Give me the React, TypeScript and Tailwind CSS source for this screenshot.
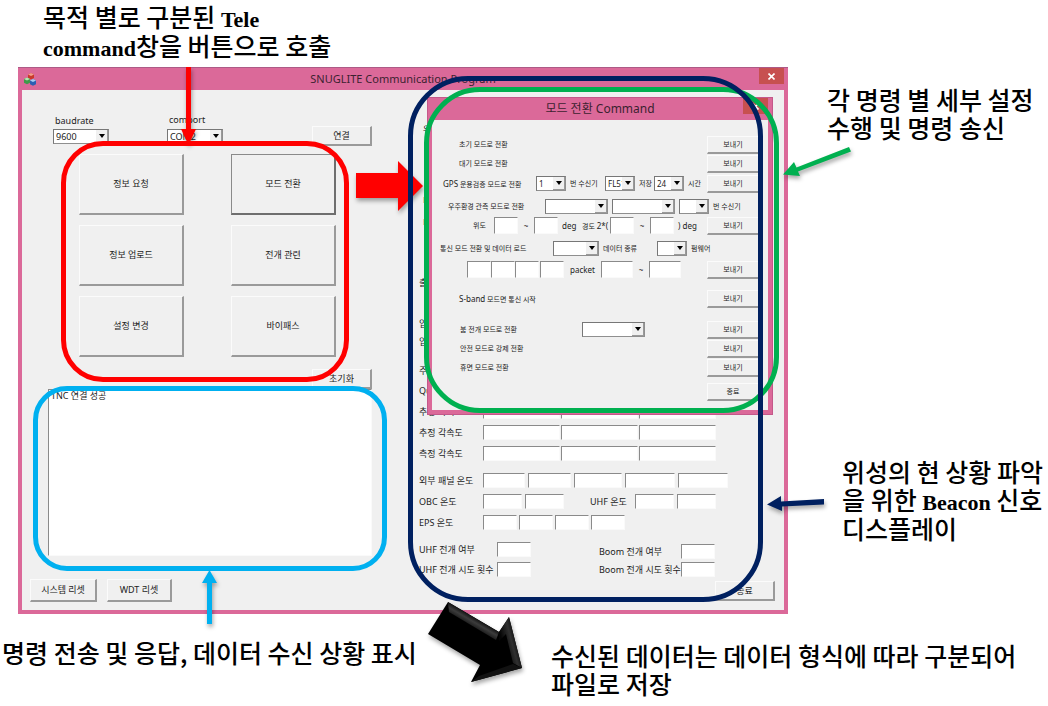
import React from "react";

const UI = "font-['Noto_Sans','Noto_Sans_CJK_KR',sans-serif]";

type BoxProps = { className: string; label: string };

function Field({ className, label }: BoxProps) {
  return (
    <input
      type="text"
      aria-label={label}
      className={`block shrink-0 border border-t-[#8a8a8a] border-l-[#8a8a8a] border-r-[#fafafa] border-b-[#fafafa] bg-white px-0.5 outline-none ${className}`}
    />
  );
}

function Drop({ className, label, value = "", id }: BoxProps & { value?: string; id?: string }) {
  return (
    <span className={`relative block h-[15px] shrink-0 ${className}`}>
      <select
        id={id}
        aria-label={label}
        defaultValue={value}
        className="block h-full w-full appearance-none border border-t-[#777] border-l-[#777] border-r-[#8f8f8f] border-b-[#8f8f8f] bg-white pl-0.5 leading-none text-[#222] outline-none"
      >
        <option value={value}>{value}</option>
      </select>
      <span className="pointer-events-none absolute top-px right-px bottom-px flex w-3 items-center justify-center border-r border-b border-[#9a9a9a] bg-[#f0f0f0]">
        <svg width="6" height="4" viewBox="0 0 6 4" aria-hidden="true">
          <path d="M0 0h6L3 4z" fill="#000" />
        </svg>
      </span>
    </span>
  );
}

function Push({
  className = "",
  strong = false,
  children,
}: {
  className?: string;
  strong?: boolean;
  children: React.ReactNode;
}) {
  const edge = strong
    ? "border-t border-l border-r-2 border-b-2 border-t-[#8a8a8a] border-l-[#8a8a8a] border-r-[#6e6e6e] border-b-[#6e6e6e]"
    : "border-t border-l border-r-2 border-b-2 border-t-[#fbfbfb] border-l-[#fbfbfb] border-r-[#9a9a9a] border-b-[#9a9a9a]";
  return (
    <button type="button" className={`flex shrink-0 items-center justify-center bg-[#f0f0f0] whitespace-nowrap ${edge} ${className}`}>
      {children}
    </button>
  );
}

function Close({ className }: { className: string }) {
  return (
    <button type="button" aria-label="닫기" className={`flex items-center justify-center bg-[#c75050] ${className}`}>
      <svg width="7" height="7" viewBox="0 0 7 7" aria-hidden="true">
        <path d="M0.5 0.5l6 6M6.5 0.5l-6 6" stroke="#fff" strokeWidth="1.6" />
      </svg>
    </button>
  );
}

function Row({ className = "", send = true, children }: { className?: string; send?: boolean; children: React.ReactNode }) {
  return (
    <div className={`flex h-[19px] items-center pr-2 whitespace-nowrap ${className}`}>
      {children}
      {send && <Push className="ml-auto h-[18px] w-[53px]">보내기</Push>}
    </div>
  );
}

function ModeDialog() {
  return (
    <section
      aria-label="모드 전환 Command"
      className="absolute top-[29px] left-[409px] w-[346px] border border-[#c4588a] bg-[#db6999] px-1 pb-1 text-[7px] leading-none text-[#222]"
    >
      <header className="relative flex h-[22px] items-center justify-center text-[12px] text-[#3c2230]">
        모드 전환 Command
        <Close className="absolute top-0 right-0 h-4 w-[25px]" />
      </header>
      <div className="bg-[#f0f0f0] pt-[15px] pb-[9px]">
        <Row className="pl-[27px]">초기 모드로 전환</Row>
        <Row className="pl-[27px]">대기 모드로 전환</Row>
        <Row className="mt-px pl-[11px]">
          <span className="w-[93px]"><span className="text-[8px]">GPS</span> 운용검증 모드로 전환</span>
          <Drop className="w-[30px] text-[8px]" label="수신기 번호" value="1" />
          <span className="ml-1 w-[35px]">번 수신기</span>
          <Drop className="w-[30px] text-[8px]" label="저장 파일" value="FL51" />
          <span className="ml-1 w-[15px]">저장</span>
          <Drop className="w-[30px] text-[8px]" label="저장 시간" value="24" />
          <span className="ml-1">시간</span>
        </Row>
        <Row className="mt-1 pl-4" send={false}>
          <span className="w-[97px]">우주환경 관측 모드로 전환</span>
          <Drop className="w-[63px]" label="관측 종류" />
          <Drop className="ml-1 w-[63px]" label="관측 방식" />
          <Drop className="ml-1 w-[30px]" label="관측 수신기" />
          <span className="ml-1">번 수신기</span>
        </Row>
        <Row className="pl-[41px]">
          <span className="w-[21px]">위도</span>
          <Field className="h-[17px] w-6" label="위도 시작" />
          <span className="w-4 text-center text-[8px]">~</span>
          <Field className="h-[17px] w-6" label="위도 끝" />
          <span className="ml-1 w-5 text-[8px]">deg</span>
          <span className="w-7 whitespace-nowrap">경도 <span className="text-[8px]">2*(</span></span>
          <Field className="h-[17px] w-6" label="경도 시작" />
          <span className="w-4 text-center text-[8px]">~</span>
          <Field className="h-[17px] w-6" label="경도 끝" />
          <span className="ml-1 text-[8px]">) deg</span>
        </Row>
        <Row className="mt-1 pl-2" send={false}>
          <span className="w-[113px]">통신 모드 전환 및 데이터 로드</span>
          <Drop className="w-[46px]" label="데이터 종류" />
          <span className="ml-1 w-[54px]">데이터 종류</span>
          <Drop className="w-[30px]" label="펌웨어" />
          <span className="ml-1">펌웨어</span>
        </Row>
        <Row className="mt-0.5 pl-[35px]">
          <Field className="h-[17px] w-6" label="packet 1" />
          <Field className="h-[17px] w-6" label="packet 2" />
          <Field className="h-[17px] w-6" label="packet 3" />
          <Field className="ml-px h-[17px] w-6" label="packet 4" />
          <span className="w-[37px] text-center text-[8px]">packet</span>
          <Field className="h-[17px] w-8" label="packet 시작" />
          <span className="w-4 text-center text-[8px]">~</span>
          <Field className="h-[17px] w-8" label="packet 끝" />
        </Row>
        <Row className="mt-2.5 pl-[27px]"><span><span className="text-[8px]">S-band</span> 모드면 통신 시작</span></Row>
        <Row className="mt-3 pl-7">
          <span className="w-[122px]">붐 전개 모드로 전환</span>
          <Drop className="w-[63px]" label="전개 대상" />
        </Row>
        <Row className="pl-7">안전 모드로 강제 전환</Row>
        <Row className="pl-7">휴면 모드로 전환</Row>
        <div className="mt-1.5 flex justify-end pr-2">
          <Push className="h-[18px] w-[53px]">종료</Push>
        </div>
      </div>
    </section>
  );
}

function ControlPanel() {
  return (
    <div className="flex w-[378px] shrink-0 flex-col">
      <div className="flex items-end pt-[23px] pl-[31px]">
        <div className="w-[114px]">
          <label htmlFor="baud" className="block pb-0.5 pl-0.5 leading-[13px]">baudrate</label>
          <Drop id="baud" className="w-14" label="baudrate" value="9600" />
        </div>
        <div className="w-[145px]">
          <label htmlFor="port" className="block pb-[3px] pl-0.5 leading-[13px]">comport</label>
          <Drop id="port" className="w-14" label="comport" value="COM2" />
        </div>
        <Push className="-mb-0.5 h-5 w-[60px]">연결</Push>
      </div>
      <div className="grid grid-cols-[105px_105px] gap-x-[47px] gap-y-[10px] pt-[10px] pl-[57px]">
        <Push className="h-[61px]">정보 요청</Push>
        <Push className="h-[61px]" strong>모드 전환</Push>
        <Push className="h-[61px]">정보 업로드</Push>
        <Push className="h-[61px]">전개 관련</Push>
        <Push className="h-[61px]">설정 변경</Push>
        <Push className="h-[61px]">바이패스</Push>
      </div>
      <Push className="mt-3 ml-[290px] h-5 w-[60px]">초기화</Push>
      <textarea
        aria-label="수신 상황"
        defaultValue="TNC 연결 성공"
        className="ml-[26px] block h-[167px] w-[324px] resize-none border border-t-[#8a8a8a] border-l-[#8a8a8a] border-r-[#fafafa] border-b-[#fafafa] bg-white px-0.5 leading-3 outline-none"
      />
      <div className="flex gap-[10px] pt-[23px] pb-2 pl-2">
        <Push className="h-[23px] w-[67px]">시스템 리셋</Push>
        <Push className="h-[23px] w-[65px]">WDT 리셋</Push>
      </div>
    </div>
  );
}

function Readout({ label, widths, className = "", gap = "gap-px" }: { label: string; widths: string[]; className?: string; gap?: string }) {
  return (
    <div className={`flex h-[15px] items-center ${className}`}>
      <span className="w-16 shrink-0 whitespace-pre">{label}</span>
      <div className={`flex ${gap}`}>
        {widths.map((w, i) => (
          <Field key={i} className={`h-[15px] ${w}`} label={`${label} ${i + 1}`} />
        ))}
      </div>
    </div>
  );
}

const wide = ["w-[77px]", "w-[77px]", "w-[77px]"];

function BeaconPanel() {
  return (
    <div className="flex grow flex-col pt-8 pl-[19px] leading-[15px]">
      <span className="pl-1">위</span>
      <span className="mt-14 pl-1">비</span>
      <span className="mt-[7px] pl-1">비</span>
      <span className="mt-[45px]">출</span>
      <span className="mt-[26px]">입</span>
      <span className="mt-[3px]">입</span>
      <span className="mt-[14px]">주</span>
      <span className="mt-[5px]">Qu</span>
      <Readout className="mt-[6px]" label="추정 자이로  bias" widths={wide} />
      <Readout className="mt-[6px]" label="추정 각속도" widths={wide} />
      <Readout className="mt-[6px]" label="측정 각속도" widths={wide} />
      <Readout
        className="mt-3"
        label="외부 패널 온도"
        gap="gap-[3px]"
        widths={["w-[42px]", "w-[43px]", "w-[48px]", "w-[50px]", "w-[50px]"]}
      />
      <div className="mt-[6px] flex">
        <Readout label="OBC 온도" gap="gap-[3px]" widths={["w-[39px]", "w-[39px]"]} />
        <div className="ml-[26px] flex items-center">
          <span className="w-[45px]">UHF 온도</span>
          <div className="flex gap-[3px]">
            <Field className="h-[15px] w-[39px]" label="UHF 온도 1" />
            <Field className="h-[15px] w-[39px]" label="UHF 온도 2" />
          </div>
        </div>
      </div>
      <Readout className="mt-[6px]" label="EPS 온도" gap="gap-0.5" widths={["w-[34px]", "w-[34px]", "w-[34px]", "w-[34px]"]} />
      <div className="mt-3 flex gap-[68px]">
        <div className="grid grid-cols-[78px_34px] gap-y-1 whitespace-nowrap">
          <span>UHF 전개 여부</span>
          <Field className="h-[15px]" label="UHF 전개 여부" />
          <span>UHF 전개 시도 횟수</span>
          <Field className="h-[15px]" label="UHF 전개 시도 횟수" />
        </div>
        <div className="grid grid-cols-[82px_34px] gap-y-[3px] pt-0.5 whitespace-nowrap">
          <span>Boom 전개 여부</span>
          <Field className="h-[15px]" label="Boom 전개 여부" />
          <span>Boom 전개 시도 횟수</span>
          <Field className="h-[15px]" label="Boom 전개 시도 횟수" />
        </div>
      </div>
      <Push className="mt-1 mr-[9px] h-5 w-[60px] self-end">종료</Push>
    </div>
  );
}

function ProgramWindow() {
  return (
    <section
      aria-label="SNUGLITE Communication Program"
      className={`relative w-[770px] shrink-0 border-t border-[#ad5a86] bg-[#db6999] px-1 pb-1 text-[9px] text-[#222] ${UI}`}
    >
      <header className="relative flex h-[22px] items-center justify-center text-[11px] text-[#3c2230]">
        <svg className="absolute top-[5px] left-0.5" width="13" height="13" viewBox="0 0 13 13" aria-hidden="true">
          <path d="M4 1.500L7 0l3 1.500v3.400L7 6.400 4 4.900z" fill="#c9392c" />
          <path d="M4 1.500L7 0l3 1.500L7 3z" fill="#f3a08f" />
          <path d="M0 6L3 4.500l3 1.500v3.700L3 11.200 0 9.700z" fill="#3f9a4a" />
          <path d="M0 6L3 4.500l3 1.500L3 7.500z" fill="#b9e3ae" />
          <path d="M6 7.500L9 6l3 1.500v3.700L9 12.700 6 11.200z" fill="#2c5fb3" />
          <path d="M6 7.500L9 6l3 1.500L9 9z" fill="#a9cdf3" />
        </svg>
        SNUGLITE Communication Program
        <Close className="absolute top-0 right-0 h-4 w-[25px]" />
      </header>
      <div className="flex bg-[#f0f0f0]">
        <ControlPanel />
        <BeaconPanel />
      </div>
      <ModeDialog />
    </section>
  );
}

function Marks() {
  return (
    <div className="pointer-events-none absolute inset-0" aria-hidden="true">
      <svg className="absolute top-0 left-0 overflow-visible drop-shadow-[1px_3px_2px_rgba(0,0,0,0.35)]" width="1048" height="706" viewBox="0 0 1048 706">
        <path d="M356 173H398V161L423 186L398 211V198H356Z" fill="#f00" />
        <path d="M186 67H191V129H196L188.5 145L181 129H186Z" fill="#f00" />
      </svg>
      <div className="absolute top-[141px] left-[61px] h-[241px] w-[288px] rounded-[42px] border-[5px] border-[#ff0000]" />
      <div className="absolute top-[386px] left-[33px] h-[185px] w-[354px] rounded-[34px] border-[5px] border-[#00b0f0]" />
      <div className="absolute top-[87px] left-[424px] h-[326px] w-[355px] rounded-[56px] border-[5px] border-[#00b050]" />
      <div className="absolute top-[76px] left-[408px] h-[526px] w-[355px] rounded-[60px] border-[5px] border-[#002060]" />
      <svg className="absolute top-0 left-0 overflow-visible drop-shadow-[1px_3px_2px_rgba(0,0,0,0.35)]" width="1048" height="706" viewBox="0 0 1048 706">
        <defs>
          <linearGradient id="bevel" x1="475" y1="617" x2="468" y2="629" gradientUnits="userSpaceOnUse">
            <stop offset="0" stopColor="#0c0c0c" />
            <stop offset="0.35" stopColor="#3c3c3c" />
            <stop offset="1" stopColor="#000" />
          </linearGradient>
          <linearGradient id="edge" x1="503" y1="645" x2="518" y2="641" gradientUnits="userSpaceOnUse">
            <stop offset="0" stopColor="#050505" />
            <stop offset="0.6" stopColor="#303030" />
            <stop offset="1" stopColor="#080808" />
          </linearGradient>
        </defs>
        <path d="M207 624V583H202L209.500 570L217 583H212V624Z" fill="#00b0f0" />
        <path d="M783 174.500L794 162L796.500 167.500L849 147L851 151.500L798 171.500L800 176Z" fill="#00b050" />
        <path d="M767 504.500L781 496V501.500L824 499V504.500L782 506.500V511Z" fill="#002060" />
        <path d="M448 602L499 632L509 617L522 668L471 682L480 665L428 634Z" fill="#000" />
        <path d="M448 602L499 632L496 640L449 612Z" fill="url(#bevel)" />
        <path d="M509 617L522 668L513 663L506 634L499 641V632Z" fill="url(#edge)" />
        <path d="M522 668L471 682L479 676L513 664Z" fill="#121212" />
      </svg>
    </div>
  );
}

function Latin({ children }: { children: React.ReactNode }) {
  return <span className="font-['Liberation_Serif',serif] text-[22px] leading-none font-bold">{children}</span>;
}

export default function App() {
  return (
    <main className="relative bg-white pb-2 font-['Noto_Sans_CJK_KR',sans-serif] text-[25px] leading-7 font-medium whitespace-nowrap text-black">
      <p className="h-[67px] pt-0.5 pl-[43px]">
        목적 별로 구분된 <Latin>Tele</Latin>
        <br />
        <Latin>command</Latin>창을 버튼으로 호출
      </p>
      <div className="flex pl-[18px] font-normal">
        <ProgramWindow />
        <aside className="flex grow flex-col font-medium">
          <p className="pt-[18px] pl-[39px]">
            각 명령 별 세부 설정
            <br />
            수행 및 명령 송신
          </p>
          <p className="pt-[316px] pl-[54px]">
            위성의 현 상황 파악
            <br />을 위한 <Latin>Beacon</Latin> 신호
            <br />
            디스플레이
          </p>
        </aside>
      </div>
      <div className="flex pt-6">
        <p className="w-[551px] pl-0.5">명령 전송 및 응답, 데이터 수신 상황 표시</p>
        <p className="pt-[3px]">
          수신된 데이터는 데이터 형식에 따라 구분되어
          <br />
          파일로 저장
        </p>
      </div>
      <Marks />
    </main>
  );
}
